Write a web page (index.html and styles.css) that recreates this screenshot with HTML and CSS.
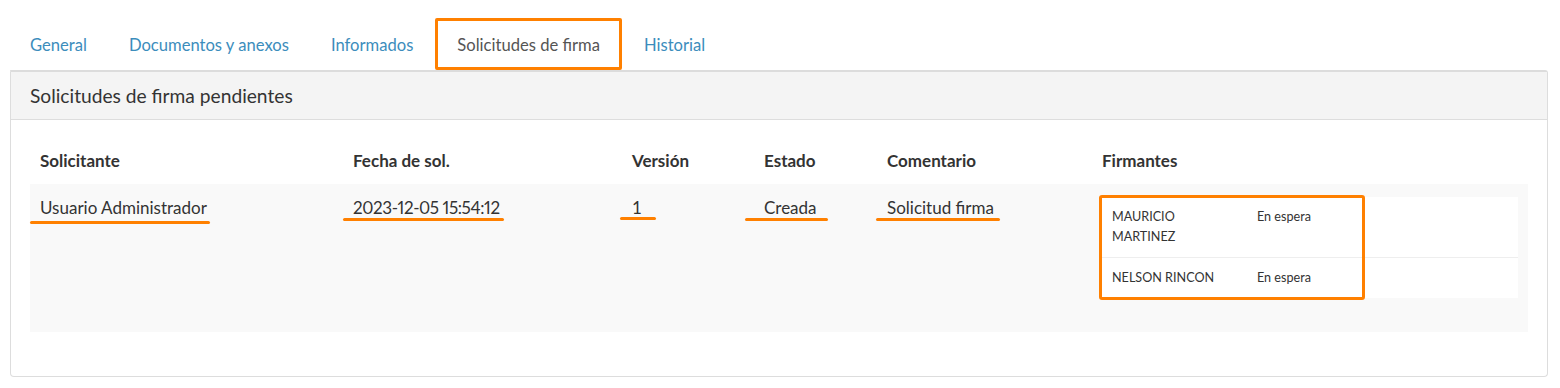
FILE: index.html
```html
<!DOCTYPE html>
<html>
<head>
	<meta charset="utf-8">
	<title>Solicitudes de firma</title>
	<meta name="viewport" content="width=device-width, initial-scale=1">
	<link rel="stylesheet" href="styles.css">
</head>
<body>

<div class="tabs-wrap">
	<ul class="nav-tabs">
		<li><a href="#">General</a></li>
		<li><a href="#">Documentos y anexos</a></li>
		<li><a href="#">Informados</a></li>
		<li class="active"><a href="#">Solicitudes de firma</a></li>
		<li><a href="#">Historial</a></li>
	</ul>

	<section class="panel">
		<div class="panel-heading">Solicitudes de firma pendientes</div>
		<div class="panel-body">
			<table class="sign-table">
				<thead>
					<tr>
						<th class="col-user">Solicitante</th>
						<th class="col-date">Fecha de sol.</th>
						<th class="col-version">Versión</th>
						<th class="col-state">Estado</th>
						<th class="col-comment">Comentario</th>
						<th class="col-signers">Firmantes</th>
					</tr>
				</thead>
				<tbody>
					<tr class="striped">
						<td><span class="mark mark-user">Usuario Administrador</span></td>
						<td><span class="mark mark-date">2023-12-05 15:54:12</span></td>
						<td><span class="mark mark-version">1</span></td>
						<td><span class="mark mark-state">Creada</span></td>
						<td><span class="mark mark-comment">Solicitud firma</span></td>
						<td class="signers-cell">
							<div class="signers-wrap">
								<table class="signers">
									<tr>
										<td class="signer-name">MAURICIO MARTINEZ</td>
										<td>En espera</td>
									</tr>
									<tr>
										<td class="signer-name">NELSON RINCON</td>
										<td>En espera</td>
									</tr>
								</table>
								<div class="signers-box"></div>
							</div>
						</td>
					</tr>
				</tbody>
			</table>
		</div>
	</section>
</div>

</body>
</html>
```

FILE: styles.css
```css
body {
	margin: 0;
	background: #fff;
	font-family: "Source Sans Pro", Lato, "Noto Sans", sans-serif;
	color: #333;
}

.tabs-wrap {
	padding: 18px 12px 0 10px;
}

.nav-tabs {
	list-style: none;
	margin: 0;
	padding: 0;
	display: flex;
	gap: 2px;
}

.nav-tabs li a {
	display: block;
	height: 52px;
	line-height: 54px;
	padding: 0 20px;
	font-size: 16.6px;
	color: #3c8dbc;
	text-decoration: none;
	box-sizing: border-box;
}

.nav-tabs li.active a {
	color: #555;
	border: 3px solid #ff8000;
	border-radius: 2px;
	line-height: 48px;
	padding: 0 19px;
}

.panel {
	border: 1px solid #ddd;
	border-top: 2px solid #dcdcdc;
	border-radius: 0 3px 4px 4px;
}

.panel-heading {
	background: #f4f4f4;
	height: 47px;
	line-height: 48px;
	padding: 0 19px;
	font-size: 19.2px;
	color: #333;
	border-bottom: 1px solid #ddd;
}

.panel-body {
	padding: 10px 19px 44px;
}

.sign-table {
	width: 100%;
	border-collapse: collapse;
	font-size: 17px;
}

.sign-table th {
	text-align: left;
	font-weight: 700;
	color: #333;
	padding: 20px 10px 12px;
	line-height: 22px;
}

.col-user { width: 293px; }
.col-date { width: 259px; }
.col-version { width: 112px; }
.col-state { width: 103px; }
.col-comment { width: 195px; }

.sign-table td {
	vertical-align: top;
	padding: 13px 10px;
	line-height: 22px;
}

.striped {
	background: #f9f9f9;
}

.mark {
	position: relative;
	display: inline-block;
}

.mark::after {
	content: "";
	position: absolute;
	height: 3px;
	top: 21px;
	border-radius: 2px;
	background: #ff8000;
}

.mark-date {
	font-variant-numeric: proportional-nums;
	letter-spacing: -0.4px;
}

.mark-user::after { left: -10px; right: -3px; top: 24px; }
.mark-date::after { left: -10px; right: -4px; top: 21px; }
.mark-version::after { left: -12px; right: -14px; top: 20px; }
.mark-state::after { left: -19px; right: -11px; }
.mark-comment::after { left: -11px; right: -6px; }

.sign-table td.signers-cell {
	padding: 13px 10px 34px 8px;
}

.signers-wrap {
	position: relative;
}

.signers {
	width: 100%;
	border-collapse: collapse;
	background: #fff;
	font-size: 12.6px;
}

.signers td {
	padding: 10px 12px;
	line-height: 20px;
	color: #333;
}

.signers tr + tr td {
	border-top: 1px solid #eee;
}

.signers td.signer-name {
	width: 121px;
}

.signers-box {
	position: absolute;
	left: -1px;
	top: -2px;
	width: 266px;
	height: 105px;
	border: 3px solid #ff8000;
	border-radius: 3px;
	box-sizing: border-box;
}
```
